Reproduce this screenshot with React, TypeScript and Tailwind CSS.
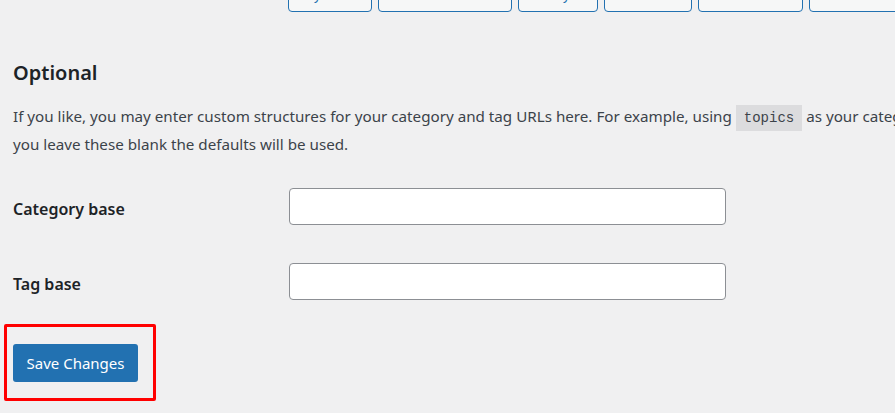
import React from 'react';

const tags = [
  { label: '%year%', w: 'w-[84px]' },
  { label: '%monthnum%', w: 'w-[134px]' },
  { label: '%day%', w: 'w-[80px]' },
  { label: '%hour%', w: 'w-[88px]' },
  { label: '%minute%', w: 'w-[105px]' },
  { label: '%second%', w: 'w-[105px]' },
];

const Field = ({ label }: { label: string }) => (
  <div className="flex items-center h-[37px]">
    <label className="w-[289px] pl-[13px] pt-[4px] text-[16px] font-semibold text-[#1d2327]">{label}</label>
    <input
      type="text"
      className="w-[437px] h-[37px] bg-white border border-[#8c8f94] rounded-[4px] px-2 outline-none"
    />
  </div>
);

export default function App() {
  return (
    <div className="w-[895px] h-[413px] overflow-hidden bg-[#f0f0f1] font-['Noto_Sans',sans-serif] text-[#3c434a]">
      {/* permalink tag buttons, only their bottoms are visible */}
      <div className="flex gap-[6px] pl-[288px] -mt-[22px] whitespace-nowrap">
        {tags.map((t) => (
          <button
            key={t.label}
            className={`${t.w} shrink-0 h-[34px] bg-[#f6f7f7] border border-[#2271b1] rounded-[4px] text-[#2271b1] text-[14px] leading-[34px] font-['Liberation_Mono',monospace]`}
          >
            {t.label}
          </button>
        ))}
      </div>

      <h2 className="mt-[48px] pl-[13px] text-[20px] leading-[26px] font-semibold text-[#1d2327]">Optional</h2>

      <p className="mt-[17px] pl-[13px] text-[15.2px] leading-[26px] whitespace-nowrap">
        If you like, you may enter custom structures for your category and tag URLs here. For example, using{' '}
        <code className="inline-block px-2 bg-[#dcdcde] text-[14px] leading-[26px] font-['Liberation_Mono',monospace] text-[#3c434a]">topics</code>{' '}
        as your category base would make your category links like http://example.org/topics/uncategorized/. If
        <br />
        you leave these blank the defaults will be used.
      </p>

      <div className="mt-[31px] flex flex-col gap-[38px]">
        <Field label="Category base" />
        <Field label="Tag base" />
      </div>

      <div className="mt-[24px] ml-[4px] w-[152px] h-[77px] border-[3px] border-[#ff0000] rounded-[2px] pl-[6px] pt-[17px]">
        <button className="w-[125px] h-[38px] bg-[#2271b1] text-white text-[15px] rounded-[3px]">Save Changes</button>
      </div>
    </div>
  );
}
